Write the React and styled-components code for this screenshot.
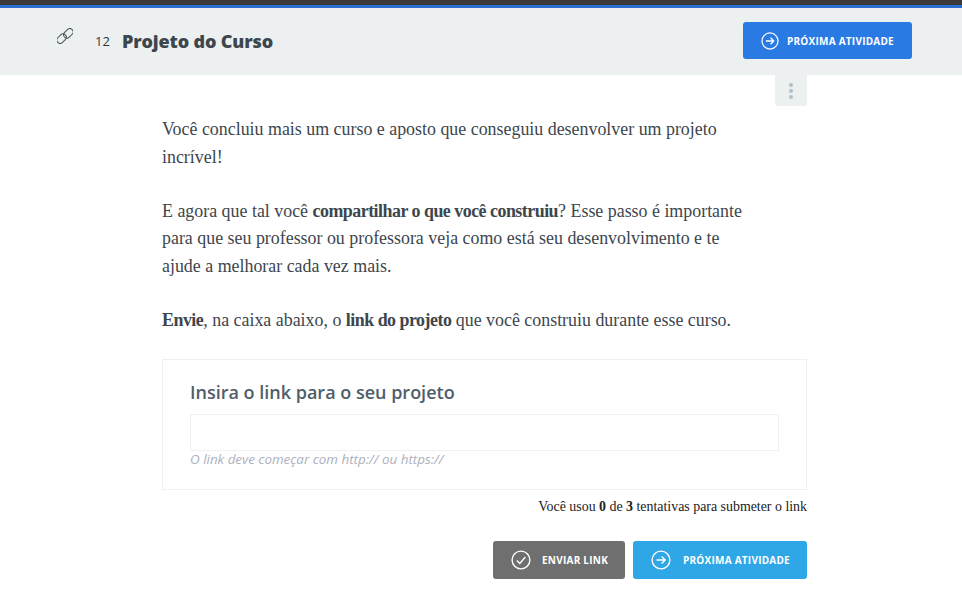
import styled, { createGlobalStyle } from 'styled-components'

const GlobalStyle = createGlobalStyle`
  html, body {
    margin: 0;
    padding: 0;
    background: #fff;
  }
`

const ArrowIcon = ({ size = 20 }) => (
  <svg width={size} height={size} viewBox="0 0 20 20" fill="none" stroke="#fff" strokeWidth="1.4">
    <circle cx="10" cy="10" r="8.9" />
    <path d="M5.5 10h8.6M10.6 6.4l3.6 3.6-3.6 3.6" />
  </svg>
)

const CheckIcon = () => (
  <svg width="20" height="20" viewBox="0 0 20 20" fill="none" stroke="#fff" strokeWidth="1.4">
    <circle cx="10" cy="10" r="8.9" />
    <path d="M5.8 10.4l3 3 5.6-6.4" />
  </svg>
)

const LinkIcon = () => (
  <svg width="16" height="16" viewBox="0 0 16 16" fill="none" stroke="#4b5257" strokeWidth="1">
    <g transform="rotate(-45 8 8)">
      <rect x="-1.6" y="4.2" width="10.6" height="6.6" rx="3.3" />
      <rect x="7" y="5.2" width="10.6" height="6.6" rx="3.3" />
    </g>
  </svg>
)

export default function App() {
  return (
    <>
      <GlobalStyle />
      <Page>
        <TopStrip />
        <Header>
          <HeaderLeft>
            <LinkSlot><LinkIcon /></LinkSlot>
            <TaskNumber>12</TaskNumber>
            <TaskTitle>Projeto do Curso</TaskTitle>
          </HeaderLeft>
          <Button $bg="#2a7ae4" $width="169px" $height="37px" $pad="18px" $gap="8px">
            <ArrowIcon size={18} />
            PRÓXIMA ATIVIDADE
          </Button>
        </Header>
        <Content>
          <MenuRow>
            <MenuTab>
              <Dot /><Dot /><Dot />
            </MenuTab>
          </MenuRow>
          <Text>
            <p>Você concluiu mais um curso e aposto que conseguiu desenvolver um projeto incrível!</p>
            <p>E agora que tal você <b>compartilhar o que você construiu</b>? Esse passo é importante para que seu professor ou professora veja como está seu desenvolvimento e te ajude a melhorar cada vez mais.</p>
            <p><b>Envie</b>, na caixa abaixo, o <b>link do projeto</b> que você construiu durante esse curso.</p>
          </Text>
          <FormCard>
            <FormTitle>Insira o link para o seu projeto</FormTitle>
            <LinkInput />
            <Hint>O link deve começar com http:// ou https://</Hint>
          </FormCard>
          <Attempts>Você usou <b>0</b> de <b>3</b> tentativas para submeter o link</Attempts>
          <Actions>
            <Button $bg="#6f6f6f" $width="132px" $height="38px" $pad="18px" $gap="11px">
              <CheckIcon />
              ENVIAR LINK
            </Button>
            <Button $bg="#2fa6e6" $width="174px" $height="38px" $pad="18px" $gap="12px">
              <ArrowIcon />
              PRÓXIMA ATIVIDADE
            </Button>
          </Actions>
        </Content>
      </Page>
    </>
  )
}

const Page = styled.div`
  width: 962px;
  height: 614px;
  overflow: hidden;
  background: #fff;
`
const TopStrip = styled.div`
  height: 5px;
  background: #3a3a3a;
  border-bottom: 3px solid #2a6fd0;
`
const Header = styled.header`
  display: flex;
  align-items: center;
  justify-content: space-between;
  box-sizing: border-box;
  height: 67px;
  padding: 0 50px 2px 57px;
  background: #ecf0f1;
`
const HeaderLeft = styled.div`
  display: flex;
  align-items: center;
`
const LinkSlot = styled.div`
  display: flex;
  width: 16px;
  height: 16px;
  margin: -9px 22px 0 0;
`
const TaskNumber = styled.span`
  width: 27px;
  color: #2f363b;
  font-family: "Open Sans", sans-serif;
  font-size: 13px;
`
const TaskTitle = styled.h1`
  margin: 0;
  color: #3d464d;
  font-family: "Open Sans", sans-serif;
  font-size: 18px;
  font-weight: 800;
  letter-spacing: -0.15px;
`
const Button = styled.div`
  display: flex;
  align-items: center;
  gap: ${p => p.$gap};
  box-sizing: border-box;
  width: ${p => p.$width};
  height: ${p => p.$height};
  padding-left: ${p => p.$pad};
  border-radius: 3px;
  background: ${p => p.$bg};
  color: #fff;
  font-family: "Open Sans", sans-serif;
  font-size: 10px;
  font-weight: 700;
  letter-spacing: 0.24px;
`
const Content = styled.main`
  width: 645px;
  margin-left: 162px;
`
const MenuRow = styled.div`
  display: flex;
  justify-content: flex-end;
  height: 31px;
`
const MenuTab = styled.div`
  display: flex;
  flex-direction: column;
  align-items: center;
  justify-content: center;
  gap: 2px;
  width: 32px;
  height: 31px;
  border-radius: 0 0 3px 3px;
  background: #ecf0f1;
`
const Dot = styled.span`
  width: 4px;
  height: 4px;
  border-radius: 50%;
  background: #aebfc9;
`
const Text = styled.div`
  width: 590px;
  margin-top: 10px;
  color: #3d464d;
  font-family: "Liberation Serif", serif;
  font-size: 17.9px;
  line-height: 27.6px;

  p {
    margin: 0 0 26.5px;
  }
  p:last-child {
    margin-bottom: 24.4px;
  }
  b {
    letter-spacing: -0.5px;
  }
`
const FormCard = styled.section`
  box-sizing: border-box;
  height: 131px;
  padding: 19px 27px 0;
  border: 1px solid #f0f0f0;
`
const FormTitle = styled.h2`
  margin: 0 0 8px;
  color: #4f5d6b;
  font-family: "Open Sans", sans-serif;
  font-size: 18px;
  font-weight: 600;
  line-height: 27px;
`
const LinkInput = styled.div`
  box-sizing: border-box;
  height: 37px;
  border: 1px solid #f0f0f0;
`
const Hint = styled.div`
  color: #adb0be;
  font-family: "Open Sans", sans-serif;
  font-size: 13.4px;
  font-style: italic;
  line-height: 17px;
`
const Attempts = styled.div`
  margin-top: 8px;
  color: #222;
  font-family: "Liberation Serif", serif;
  font-size: 13.9px;
  line-height: 18px;
  text-align: right;
`
const Actions = styled.div`
  display: flex;
  justify-content: flex-end;
  gap: 8px;
  margin-top: 25px;
`
